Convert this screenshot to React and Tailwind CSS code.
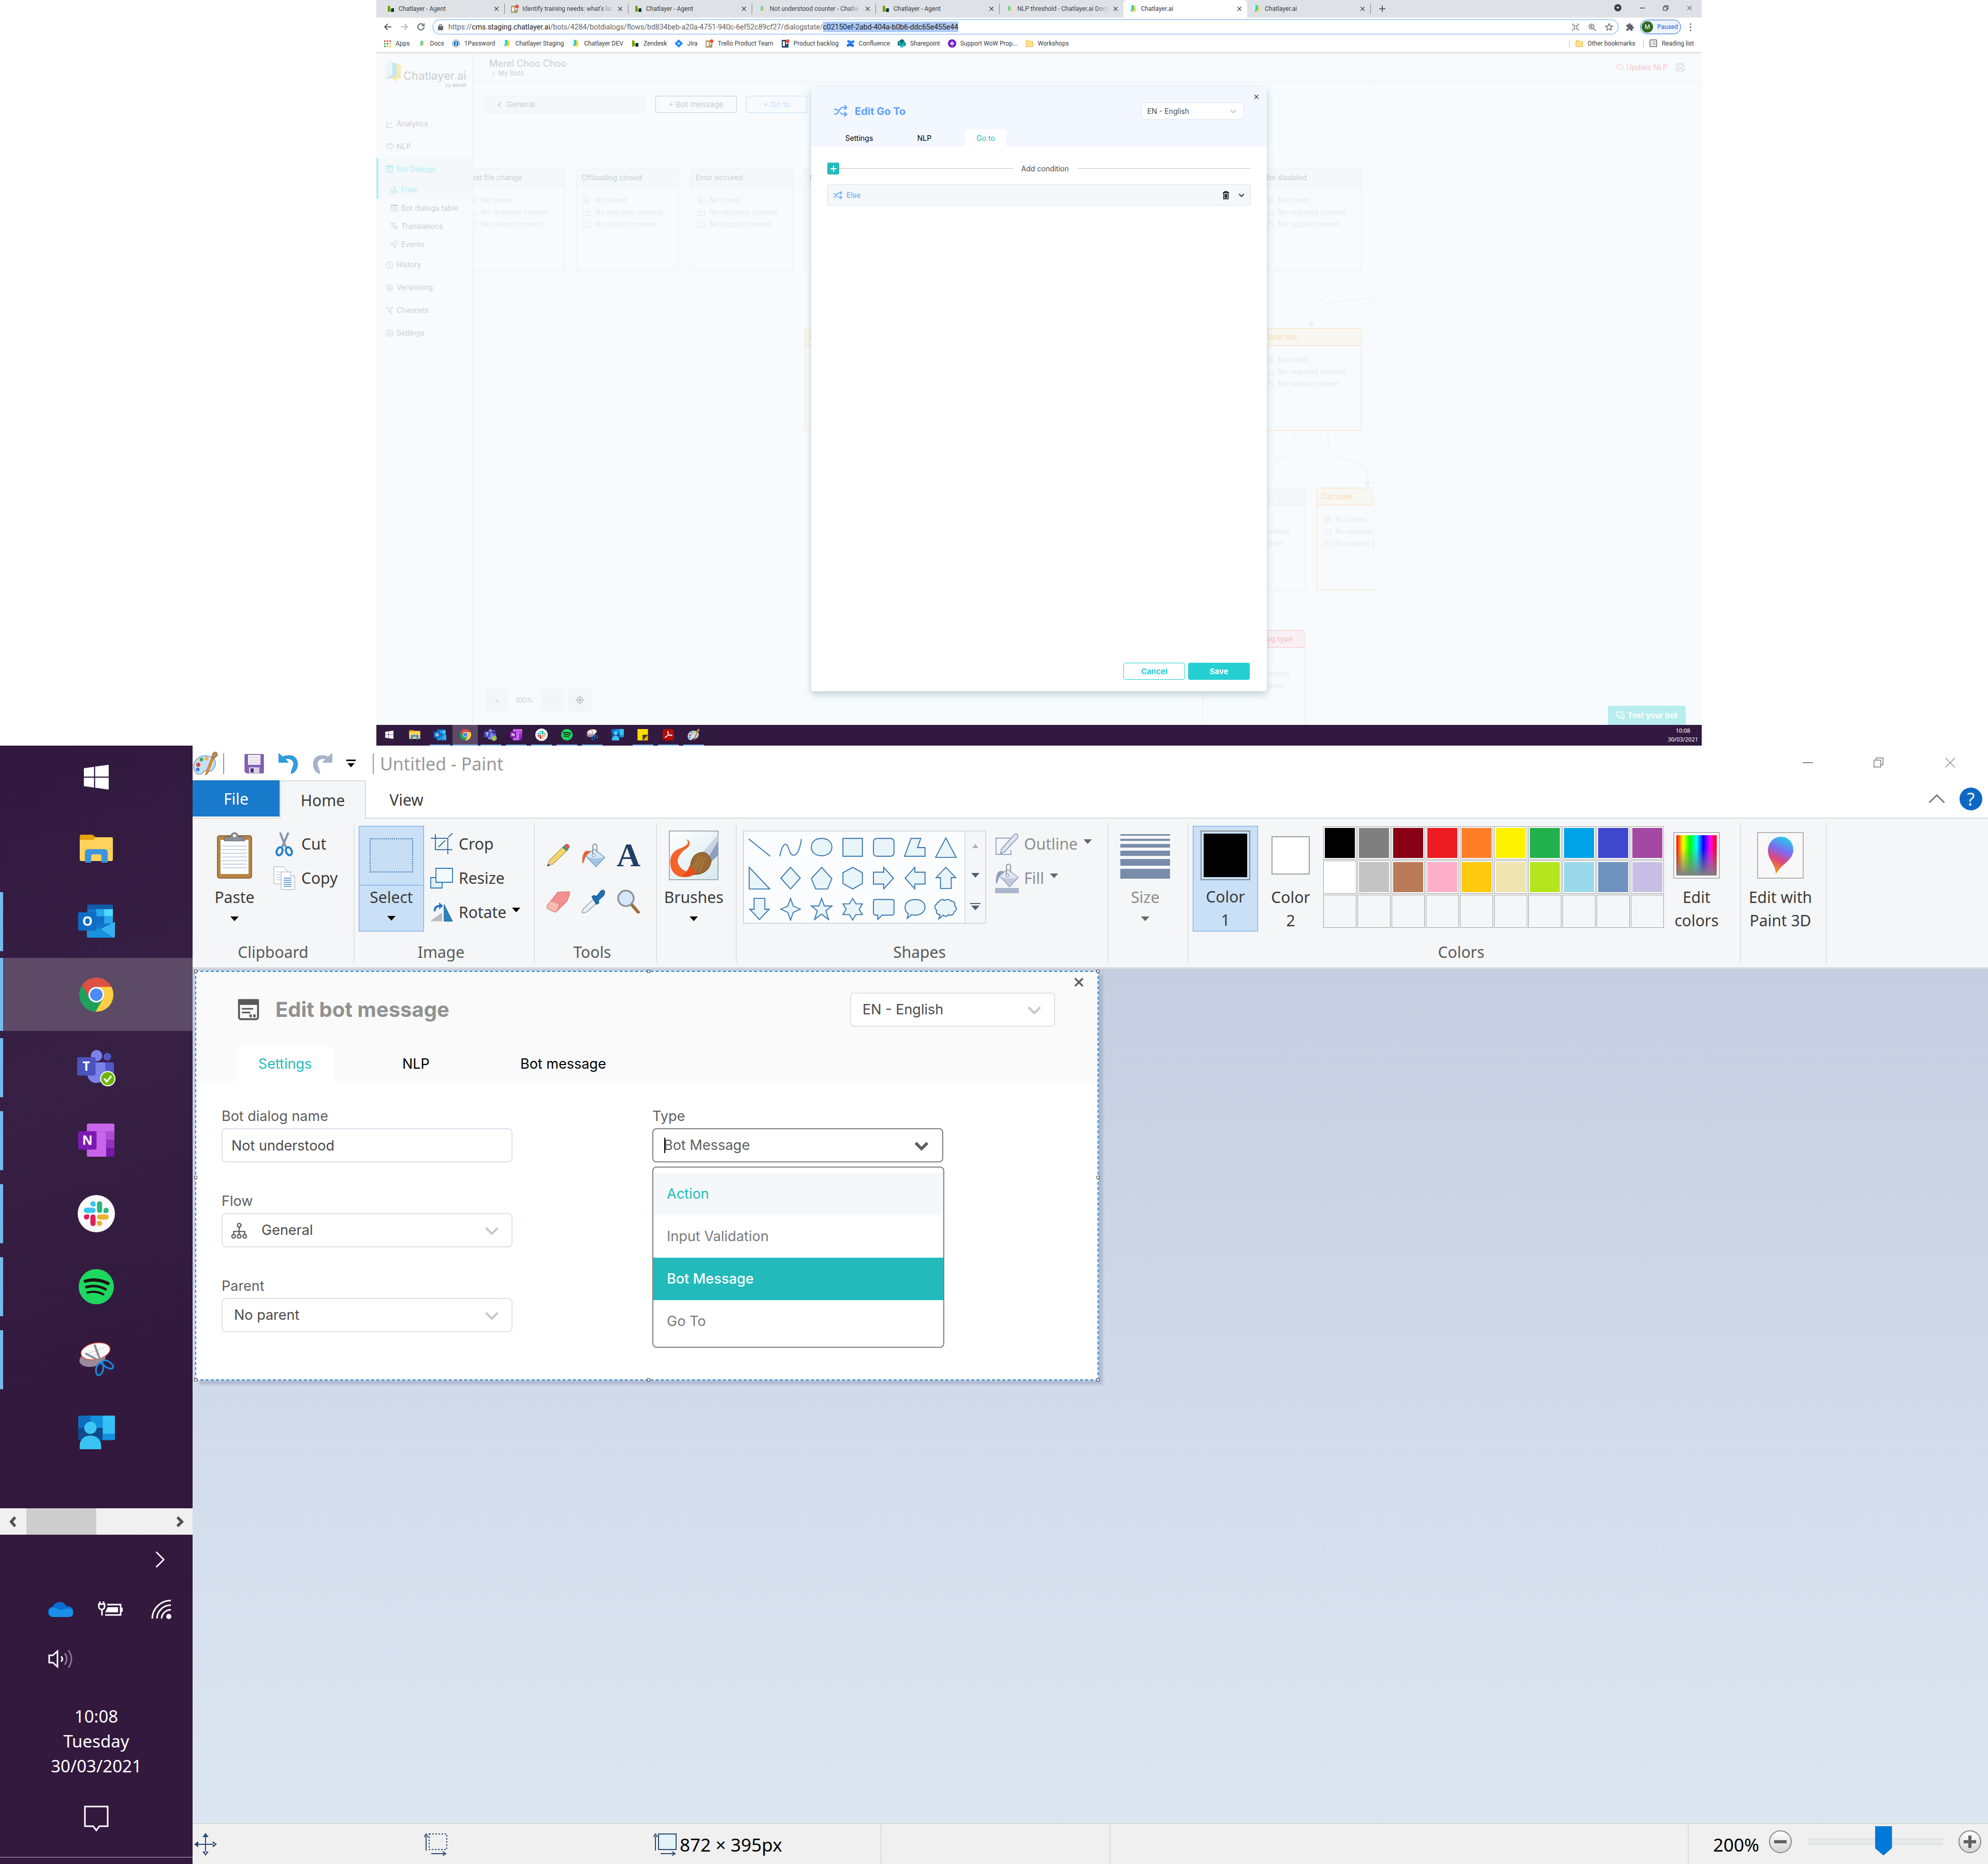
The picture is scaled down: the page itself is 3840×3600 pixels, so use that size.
import React from "react";

const SEGOE = "font-['Noto_Sans',sans-serif]";

/* ---------- application icons ---------- */

const Windows = ({ className }) => (
  <svg viewBox="0 0 24 24" className={className} fill="#fff" preserveAspectRatio="none">
    <path d="M0 3.4 9.8 2v9.4H0zM10.9 1.8 24 0v11.4H10.9zM0 12.5h9.8V22L0 20.6zM10.9 12.5H24V24l-13.1-1.9z" />
  </svg>
);

const Folder = ({ className }) => (
  <svg viewBox="0 0 64 54" className={className}>
    <path d="M0 3a3 3 0 0 1 3-3h21a3 3 0 0 1 2 1l5 4h30a3 3 0 0 1 3 3v20H0z" fill="#e3a008" />
    <path d="M0 10h26l5-5h30a3 3 0 0 1 3 3v40a3 3 0 0 1-3 3H3a3 3 0 0 1-3-3z" fill="#ffd35b" />
    <path d="M10 54V34a6 6 0 0 1 6-6h32a6 6 0 0 1 6 6v20H42V42a4 4 0 0 0-4-4H26a4 4 0 0 0-4 4v12z" fill="#3d94dc" />
  </svg>
);

const LetterTile = ({ letter, fill }) => (
  <>
    <rect x="0" y="15" width="36" height="36" rx="3" fill={fill} />
    <text x="18" y="42" textAnchor="middle" fontSize="25" fontWeight="700" fontFamily="Open Sans, sans-serif" fill="#fff">{letter}</text>
  </>
);

const Outlook = ({ className }) => (
  <svg viewBox="0 0 72 66" className={className}>
    <rect x="18" y="0" width="50" height="50" rx="3" fill="#1476c9" />
    <rect x="18" y="0" width="50" height="9" rx="3" fill="#0f5ba8" />
    <path d="M35 9h16v14H35z" fill="#28a8ea" />
    <path d="M51 9h17v14H51z" fill="#50d9ff" />
    <path d="M35 23h16v14H35z" fill="#0f6fc6" />
    <path d="M51 23h17v14H51z" fill="#28a8ea" />
    <path d="M17 35 44 48 72 34v28a3 3 0 0 1-3 3H20a3 3 0 0 1-3-3z" fill="#1a8fde" />
    <path d="M44 48 72 34v28a3 3 0 0 1-2 3z" fill="#35b2ec" />
    <LetterTile letter="O" fill="#0f6cc4" />
  </svg>
);

const Chrome = ({ className }) => (
  <svg viewBox="0 0 48 48" className={className}>
    <path d="M3.87 10.93A24 24 0 0 1 45.35 13H24a11 11 0 0 0-9.5 16.5z" fill="#dd5044" />
    <path d="M45.35 13a24 24 0 0 1-22.6 34.97L33.5 29.5A11 11 0 0 0 24 13z" fill="#ffce44" />
    <path d="M22.75 47.97A24 24 0 0 1 3.87 10.93L14.5 29.5a11 11 0 0 0 19 0z" fill="#1fa15d" />
    <circle cx="24" cy="24" r="11" fill="#fff" />
    <circle cx="24" cy="24" r="8.8" fill="#4c8bf5" />
  </svg>
);

const Teams = ({ className }) => (
  <svg viewBox="0 -3 76 75" className={className}>
    <circle cx="38" cy="11" r="11" fill="#7b83eb" />
    <circle cx="59" cy="13" r="7.5" fill="#5059c9" />
    <path d="M46 24h22a4 4 0 0 1 4 4v20a13 13 0 0 1-26 0z" fill="#5059c9" />
    <path d="M20 24h32a3 3 0 0 1 3 3v20a17.500 17.500 0 0 1-35 0z" fill="#7b83eb" />
    <g transform="translate(0 -1)"><LetterTile letter="T" fill="#4b53bc" /></g>
    <circle cx="60" cy="56" r="15" fill="#fff" />
    <circle cx="60" cy="56" r="13" fill="#6bb700" />
    <path d="m53 56 5 6 9-11" fill="none" stroke="#fff" strokeWidth="3.500" />
  </svg>
);

const OneNote = ({ className }) => (
  <svg viewBox="0 0 72 66" className={className}>
    <path d="M20 0h48a3 3 0 0 1 3 3v13H17V3a3 3 0 0 1 3-3z" fill="#ca64ea" />
    <path d="M17 16h38v49H20a3 3 0 0 1-3-3z" fill="#ca64ea" />
    <path d="M55 16h16v16H55z" fill="#ae4bd5" />
    <path d="M55 32h16v16H55z" fill="#9332bf" />
    <path d="M55 48h16v14a3 3 0 0 1-3 3H55z" fill="#7719aa" />
    <LetterTile letter="N" fill="#7a1ab0" />
  </svg>
);

const Slack = ({ className }) => (
  <svg viewBox="-6 -6 36 36" className={className}>
    <circle cx="12" cy="12" r="18" fill="#fbfbfb" />
    {["#36c5f0", "#2eb67d", "#ecb22e", "#e01e5a"].map((c, i) => (
      <g key={c} fill={c} transform={`rotate(${i * 90} 12 12)`}>
        <rect x="0" y="6.300" width="11.300" height="5" rx="2.500" />
        <path d="M8.800 0a2.500 2.500 0 0 0 0 5h2.500V2.500A2.500 2.500 0 0 0 8.800 0z" />
      </g>
    ))}
  </svg>
);

const Spotify = ({ className }) => (
  <svg viewBox="0 0 48 48" className={className} fill="none" stroke="#191414" strokeLinecap="round">
    <circle cx="24" cy="24" r="24" fill="#1ed760" stroke="none" />
    <path d="M9 16.500c10-3 22-2 31 3.200" strokeWidth="4.400" />
    <path d="M10.500 24.500c9-2.500 18-1.500 26 3" strokeWidth="3.600" />
    <path d="M12 32c7-1.800 15-1.200 21.500 2.500" strokeWidth="3" />
  </svg>
);

const Snip = ({ className }) => (
  <svg viewBox="0 0 68 68" className={className} fill="none">
    <ellipse cx="26" cy="33" rx="26" ry="15" fill="#9a8a9c" transform="rotate(-12 26 33)" />
    <ellipse cx="32" cy="18" rx="29" ry="16" fill="#fafafa" stroke="#d8432f" strokeWidth="1.500" transform="rotate(-12 32 18)" />
    <path d="M18 22 50 11M22 29l20-8" stroke="#d0d0d0" strokeWidth="1.500" />
    <path d="M30 5 42 38M12 22l30 16" stroke="#8b8f96" strokeWidth="4" />
    <ellipse cx="40" cy="53" rx="7" ry="12" stroke="#1a86d8" strokeWidth="3.500" transform="rotate(12 40 53)" />
    <ellipse cx="56" cy="44" rx="6" ry="12" stroke="#1a86d8" strokeWidth="3.500" transform="rotate(-58 56 44)" />
  </svg>
);

const Contacts = ({ className }) => (
  <svg viewBox="0 0 72 66" className={className}>
    <rect x="0" y="0" width="72" height="48" rx="2" fill="#0f6cbd" />
    <path d="M24 0h24v24H24z" fill="#1490df" />
    <path d="M48 0h22a2 2 0 0 1 2 2v34H48z" fill="#35c1f1" />
    <path d="M0 24h48v24H0z" fill="#114a8b" />
    <path d="M48 36h24v10a2 2 0 0 1-2 2H48z" fill="#1490df" />
    <circle cx="24" cy="24" r="12" fill="#3fc8f5" />
    <path d="M3 66V58c0-10 8-19 21-19s21 9 21 19v8z" fill="#38c3f3" />
  </svg>
);

const Sticky = ({ className }) => (
  <svg viewBox="0 0 22 24" className={className}>
    <path d="M0 0h22v12H11v12H0z" fill="#ffdd00" />
    <path d="M11 24V12h11z" fill="#3b3a39" />
    <path d="M11 24 22 12v12z" fill="#f0b400" />
  </svg>
);

const Acrobat = ({ className }) => (
  <svg viewBox="0 0 24 24" className={className}>
    <rect width="24" height="24" rx="4" fill="#b30b00" />
    <path d="M5 18c3 0 8-7 7-12-.4-1.800-1.800-1-1.400 1 .6 3.400 4 7 8 7 2 0 1.800-1.600 0-1.600C14 12.400 8 14.500 5.500 17z" fill="none" stroke="#fff" strokeWidth="1.300" />
  </svg>
);

const Palette = ({ className }) => (
  <svg viewBox="0 0 48 46" className={className}>
    <path d="M20 8C8 9 0 20 1 31c1 10 8 14 14 12 5-1 5-7 10-7 5 0 5 3 9 1 8-4 11-14 8-21C39 10 30 7 20 8z" fill="#c4dff2" stroke="#6f9cc0" strokeWidth="1.500" />
    <circle cx="10" cy="25" r="4" fill="#e5413a" />
    <circle cx="16" cy="15" r="3.500" fill="#4aa545" />
    <circle cx="26" cy="13" r="3.500" fill="#f2b53a" />
    <circle cx="9" cy="34" r="3.500" fill="#3c7ed0" />
    <path d="m40 12-12 30-4 3 1-6 11-28z" fill="#e8912f" stroke="#a85c17" strokeWidth="1" />
    <path d="m36 11 2-8c2-3 5-3 7-3 0 4 3 4 2 7l-6 6z" fill="#b98a5a" stroke="#7c5730" strokeWidth="1" />
  </svg>
);

/* ---------- small shared drawings ---------- */

const Chev = ({ className, dir = "down", w = 3 }) => {
  const d = { down: "M4 8l8 8 8-8", left: "M15 4l-7 8 7 8", right: "M8 4l8 8-8 8", up: "M4 16l8-8 8 8" }[dir];
  return (
    <svg viewBox="0 0 24 24" className={className} fill="none" stroke="currentColor" strokeWidth={w}><path d={d} /></svg>
  );
};

const Cross = ({ className, w = 2 }) => (
  <svg viewBox="0 0 24 24" className={className} fill="none" stroke="currentColor" strokeWidth={w}><path d="M3 3l18 18M21 3 3 21" /></svg>
);

const Restore = ({ className, w = 2 }) => (
  <svg viewBox="0 0 24 24" className={className} fill="none" stroke="currentColor" strokeWidth={w}><path d="M2 7h15v15H2zM7 7V2h15v15h-5" /></svg>
);

const Shuffle = ({ className }) => (
  <svg viewBox="0 0 24 24" className={className} fill="none" stroke="currentColor" strokeWidth="2">
    <path d="M1 17h3c6 0 5-11 11-11h7M18.500 2 22.500 6l-4 4M1 9h3c2 0 3 .8 4 2.500M12 14.500c1 2 2 3 4 3h6M18.500 13.500l4 4-4 4" />
  </svg>
);

const FlowIcon = ({ className }) => (
  <svg viewBox="0 0 24 24" className={className} fill="none" stroke="currentColor" strokeWidth="1.800">
    <circle cx="12" cy="4" r="2.600" /><circle cx="4" cy="20" r="2.600" /><circle cx="12" cy="20" r="2.600" /><circle cx="20" cy="20" r="2.600" />
    <path d="M12 7v10M4 17v-4h16v4" />
  </svg>
);

const DialogIcon = ({ className }) => (
  <svg viewBox="0 0 24 24" className={className} fill="none" stroke="currentColor" strokeWidth="2">
    <rect x="2" y="2" width="20" height="20" rx="2" />
    <path d="M2 2h20v4H2z" fill="currentColor" />
    <path d="M5 11h12M5 15h9" strokeWidth="1.600" />
    <path d="M13 18.500h2.500M17 18.500h2.500" strokeWidth="3" />
  </svg>
);

const Brain = ({ className }) => (
  <svg viewBox="0 0 24 22" className={className} fill="none" stroke="currentColor" strokeWidth="1.600">
    <path d="M6 3c2-2 5-2 6-1 2-1 5-1 7 1 3 0 4 3 3 5 2 3 0 7-3 7-1 1-3 2-4 1-2 1-3 0-4-1-3 1-6 0-6-2-3 0-4-3-3-5-1-3 1-5 4-5zM12 2v4M8 7h4M16 5c1 1 1 2 3 2M17 16l2 4M4 9h4" />
  </svg>
);

const NAV_DRAW = {
  chart: <path d="M2 2v20h20M6 17l4-8 4 4 6-9" />,
  table: <><rect x="2" y="3" width="20" height="18" rx="2" /><path d="M2 5h20" strokeWidth="3.500" /><path d="M9 9v10M15 9v10M6 12h12M6 16h12" strokeWidth="1" /></>,
  translate: <path d="M1 4h14M8 1v3M3 4c2 6 6 9 9 10M13 4C11 9 6 13 2 15M12 22l5-12 5 12M14 18h6" />,
  events: <><circle cx="16" cy="7" r="5.500" /><circle cx="5" cy="12.500" r="4" /><circle cx="13.500" cy="19.500" r="2.500" /></>,
  clock: <><circle cx="12" cy="12" r="10" /><path d="M12 6v7h4" /></>,
  layers: <path d="M12 2 2 7l10 5 10-5zM2 12l10 5 10-5M2 17l10 5 10-5" />,
  channels: <><circle cx="12" cy="12" r="4.500" /><path d="M9 9 4 4M15 9l4-5M14 16l3 5" /><circle cx="3.500" cy="3.500" r="1.500" /><circle cx="20" cy="3.500" r="1.500" /><circle cx="17" cy="21" r="1.500" /></>,
  gear: <><circle cx="12" cy="12" r="4" /><path d="M9 3l1-2h4l1 2 3 1 3-1 2 4-2 2v4l2 3-2 4-3-1-3 1-1 2h-4l-1-2-3-1-3 1-2-4 2-3v-3L1 7l2-4 3 1z" /></>,
};

const NavIcon = ({ kind, className }) => {
  if (kind === "flow") return <FlowIcon className={className} />;
  if (kind === "dialog") return <DialogIcon className={className} />;
  if (kind === "brain") return <Brain className={className} />;
  return <svg viewBox="0 0 24 24" className={className} fill="none" stroke="currentColor" strokeWidth="1.600">{NAV_DRAW[kind]}</svg>;
};

/* ---------- browser ---------- */

const Book = ({ className }) => (
  <svg viewBox="0 0 16 16" className={className}>
    <path d="M6 2h6a1 1 0 0 1 1 1v10h-3v3l-3-3H4z" fill="#fcd53f" />
    <path d="M4 1h5v9l-6 4z" fill="#1fd0d6" />
    <path d="M2 3l3-2v8l-3 5z" fill="#d4f3f4" />
  </svg>
);

const FAVICON = {
  zendesk: <svg viewBox="0 0 16 16" className="size-4 shrink-0"><path d="M2 2h4l2 9-3 3H2z" fill="#78a300" /><path d="M9 7h5v7H8z" fill="#03363d" /></svg>,
  trello: <svg viewBox="0 0 16 16" className="size-4 shrink-0"><rect x="1" y="2" width="13" height="14" rx="1" fill="#b09a70" /><path d="M3 5h4v8H3zM9 5h3v5H9z" fill="#fff" /><circle cx="12.500" cy="3.500" r="3.500" fill="#eb4f3a" /></svg>,
  backlog: <svg viewBox="0 0 16 16" className="size-4 shrink-0"><rect x="1" y="1" width="13" height="15" rx="1" fill="#2a4a70" /><path d="M3 4h4v9H3zM9 4h3v5H9z" fill="#fff" /><circle cx="12.500" cy="3.500" r="3.500" fill="#eb4f3a" /></svg>,
  book: <Book className="size-4 shrink-0" />,
  docs: <Book className="size-4 shrink-0 p-0.5" />,
  apps: <svg viewBox="0 0 16 16" className="size-4 shrink-0">{["#ea4335", "#ea4335", "#ea4335", "#34a853", "#4285f4", "#fbbc05", "#34a853", "#fbbc05", "#fbbc05"].map((c, i) => <rect key={i} x={2 + (i % 3) * 5} y={2 + Math.floor(i / 3) * 5} width="3" height="3" fill={c} />)}</svg>,
  onepw: <svg viewBox="0 0 16 16" className="size-4 shrink-0"><circle cx="8" cy="8" r="7" fill="#fff" stroke="#6b7785" /><circle cx="8" cy="8" r="5" fill="#1a6fd6" /><path d="M8 5v6" stroke="#fff" strokeWidth="2" /></svg>,
  jira: <svg viewBox="0 0 16 16" className="size-4 shrink-0"><path d="M8 0l8 8-8 8-8-8z" fill="#2684ff" /><path d="M8 5.500 10.500 8 8 10.500 5.500 8z" fill="#fff" /></svg>,
  confluence: <svg viewBox="0 0 16 16" className="size-4 shrink-0"><path d="M0 12c4-6 7-5 11-3l4 2-2 4-5-2c-2-1-3-1-5 2z" fill="#1868db" /><path d="M16 4c-4 6-7 5-11 3L1 5l2-4 5 2c2 1 3 1 5-2z" fill="#2684ff" /></svg>,
  sharepoint: <svg viewBox="0 0 16 16" className="size-4 shrink-0"><circle cx="8" cy="5" r="5" fill="#036c70" /><circle cx="11.500" cy="9" r="4.500" fill="#1a9ba1" /><circle cx="8" cy="12.500" r="3.500" fill="#37c6d0" /><rect x="0" y="4" width="8" height="8" rx="1" fill="#03787c" /><path d="M5.500 6.500c-2-1-3 .5-1.500 1.500s.5 2.500-1.500 1.500" fill="none" stroke="#fff" /></svg>,
  support: <svg viewBox="0 0 16 16" className="size-4 shrink-0"><circle cx="8" cy="8" r="8" fill="#6c1cc4" /><path d="M8 3l4 5-4 5-4-5z" fill="#fff" /><path d="M8 4v8" stroke="#6c1cc4" /></svg>,
  folder: <svg viewBox="0 0 16 16" className="size-4 shrink-0"><path d="M1 2h5l2 2h6v10H1z" fill="#ffe08a" stroke="#e3b33c" /></svg>,
  reading: <svg viewBox="0 0 16 16" className="size-4 shrink-0" fill="none" stroke="#5f6368"><rect x="1" y="1" width="13" height="13" rx="1" strokeWidth="1.500" /><path d="M3.500 4.500h2M7 4.500h5M3.500 7.500h2M7 7.500h5M3.500 10.500h2M7 10.500h5" /></svg>,
};

const TABS = [
  ["zendesk", "Chatlayer - Agent"],
  ["trello", "Identify training needs: what's lac"],
  ["zendesk", "Chatlayer - Agent"],
  ["docs", "Not understood counter - Chatla"],
  ["zendesk", "Chatlayer - Agent"],
  ["docs", "NLP threshold - Chatlayer.ai Docu"],
  ["book", "Chatlayer.ai", true],
  ["book", "Chatlayer.ai"],
];

const BOOKMARKS = [
  ["apps", "Apps"], ["docs", "Docs"], ["onepw", "1Password"], ["book", "Chatlayer Staging"], ["book", "Chatlayer DEV"],
  ["zendesk", "Zendesk"], ["jira", "Jira"], ["trello", "Trello Product Team"], ["backlog", "Product backlog"],
  ["confluence", "Confluence"], ["sharepoint", "Sharepoint"], ["support", "Support WoW Prop..."], ["folder", "Workshops"],
];

function Browser() {
  return (
    <header className="font-[Roboto,sans-serif] text-xs text-[#3c4043]">
      <div className="flex h-[34px] items-stretch bg-[#dee1e6] pl-[9px]">
        {TABS.map(([icon, title, active], i) => (
          <div
            key={i}
            className={"flex w-[239px] shrink items-center gap-[7px] pr-[10px] pl-[11px] " + (active ? "rounded-t-lg bg-white" : "")}
          >
            {FAVICON[icon]}
            <span className={"min-w-0 flex-1 overflow-hidden whitespace-nowrap " + (title.length > 20 ? "[mask-image:linear-gradient(to_right,#000_85%,transparent)]" : "")}>{title}</span>
            <button aria-label="Close tab"><Cross className="size-[10px]" w={3} /></button>
            {!active && i !== 5 && <span className="-mr-[10px] ml-[3px] h-5 w-px bg-[#80868b]" />}
          </div>
        ))}
        <button aria-label="New tab" className="flex w-11 items-center justify-center">
          <svg viewBox="0 0 12 12" className="size-3" stroke="#3c4043" strokeWidth="1.600"><path d="M6 0v12M0 6h12" /></svg>
        </button>
        <div className="ml-auto flex items-center gap-[35px] pr-[18px] pb-1 text-black">
          <span className="flex size-[14px] items-center justify-center rounded-full bg-[#3c4043]"><svg viewBox="0 0 8 8" className="size-[6px]" fill="#fff"><path d="M0 2h8L4 7z" /></svg></span>
          <button aria-label="Minimize" className="h-px w-[10px] bg-black" />
          <button aria-label="Restore"><Restore className="size-[11px]" /></button>
          <button aria-label="Close"><Cross className="size-[11px]" /></button>
        </div>
      </div>
      <div className="flex h-9 items-center bg-white pr-[18px] pl-[13px] text-[#5f6368]">
        <div className="flex w-[95px] items-center gap-[14px]">
          <svg viewBox="0 0 18 18" className="size-[18px]" fill="none" stroke="#5f6368" strokeWidth="2"><path d="M16 9H3M9 3 3 9l6 6" /></svg>
          <svg viewBox="0 0 18 18" className="size-[18px]" fill="none" stroke="#babcbe" strokeWidth="2"><path d="M2 9h13M9 3l6 6-6 6" /></svg>
          <svg viewBox="0 0 18 18" className="size-[18px]" fill="none" stroke="#5f6368" strokeWidth="2"><path d="M15 9a6 6 0 1 1-2-4.500M15 2v4.500h-4.500" /></svg>
        </div>
        <div className="flex h-[30px] flex-1 items-center rounded-full border-2 border-[#b3d1f7] px-[9px] text-sm">
          <svg viewBox="0 0 12 14" className="mr-[10px] h-[13px] w-[10px]" fill="none" stroke="#5f6368" strokeWidth="2"><path d="M3 6V4a3 3 0 0 1 6 0v2" /><rect x="1" y="6" width="10" height="7" fill="#5f6368" /></svg>
          <span>https://<span className="text-[#202124]">cms.staging.chatlayer.ai</span>/bots/4284/botdialogs/flows/bd834beb-a20a-4751-940c-6ef52c89cf27/dialogstate/<mark className="bg-[#acc9f8] py-[2px] text-[#202124]">c02150ef-2abd-404a-b0b6-ddc65e455e44</mark></span>
          <span className="ml-auto flex items-center gap-[17px]">
            <svg viewBox="0 0 16 16" className="size-[15px]" fill="#5f6368"><path d="M1 1h4v1H2v3H1zM11 1h4v4h-1V2h-3zM1 11h1v3h3v1H1zM14 11h1v4h-4v-1h3zM4 4h3v3H4zM9 4h3v3H9zM4 9h3v3H4zM9 9h3v3H9z" /></svg>
            <svg viewBox="0 0 16 16" className="size-[15px]" fill="none" stroke="#5f6368" strokeWidth="1.600"><circle cx="6.500" cy="6.500" r="5" /><path d="m10.500 10.500 5 5M4 6.500h5M6.500 4v5" /></svg>
            <svg viewBox="0 0 16 16" className="size-4" fill="none" stroke="#5f6368" strokeWidth="1.400"><path d="m8 1.500 2 4.500 4.700.4-3.600 3.100 1.100 4.700L8 11.700l-4.200 2.500 1.100-4.700L1.300 6.400 6 6z" /></svg>
          </span>
        </div>
        <div className="flex items-center pl-[13px]">
          <svg viewBox="0 0 24 24" className="mr-[11px] size-[17px]" fill="#5f6368"><path d="M20.500 11H19V7a2 2 0 0 0-2-2h-4V3.500a2.500 2.500 0 0 0-5 0V5H4a2 2 0 0 0-2 2v3.800h1.500a2.700 2.700 0 0 1 0 5.400H2V20a2 2 0 0 0 2 2h3.800v-1.500a2.700 2.700 0 0 1 5.400 0V22H17a2 2 0 0 0 2-2v-4h1.500a2.500 2.500 0 0 0 0-5z" /></svg>
          <button className="flex h-7 w-[79px] items-center gap-2 rounded-full border border-[#1967d2] bg-[#eef3fd] pl-[2px] text-[#1967d2]">
            <span className="flex size-[22px] items-center justify-center rounded-full bg-[#33691e] text-white">M</span>Paused
          </button>
          <button aria-label="Menu" className="ml-[14px] flex w-[8px] flex-col items-center gap-[3px]">{[0, 1, 2].map((i) => <span key={i} className="size-[3px] rounded-full bg-[#5f6368]" />)}</button>
        </div>
      </div>
      <nav className="flex h-[33px] items-center gap-[15px] border-b-2 border-[#dadce0] bg-white pr-[15px] pb-[3px] pl-[13px]">
        {BOOKMARKS.map(([icon, label]) => (
          <a key={label} href="#" className="flex items-center gap-2 whitespace-nowrap">{FAVICON[icon]}{label}</a>
        ))}
        <a href="#" className="ml-auto flex items-center gap-2 border-l border-[#bdc1c6] pl-[11px] whitespace-nowrap">{FAVICON.folder}Other bookmarks</a>
        <a href="#" className="flex items-center gap-2 border-l border-[#bdc1c6] pl-[11px] whitespace-nowrap">{FAVICON.reading}Reading list</a>
      </nav>
    </header>
  );
}

/* ---------- Chatlayer application ---------- */

const NAV = [
  { icon: "chart", label: "Analytics", cls: "h-11 pl-[18px]" },
  { icon: "brain", label: "NLP", cls: "h-11 pl-[18px]" },
  { icon: "dialog", label: "Bot Dialogs", cls: "h-[43px] pl-[14px] border-l-4 border-[#b6ecee] bg-[#f4f8fb] text-[#b6ecee]" },
  { icon: "flow", label: "Flow", cls: "h-9 pl-[23px] border-l-4 border-[#b6ecee] bg-[#f4f8fb] text-[#b6ecee]" },
  { icon: "table", label: "Bot dialogs table", cls: "h-[35px] pl-[27px]" },
  { icon: "translate", label: "Translations", cls: "h-[35px] pl-[27px]" },
  { icon: "events", label: "Events", cls: "h-[35px] pl-[27px]" },
  { icon: "clock", label: "History", cls: "h-11 pl-[18px]" },
  { icon: "layers", label: "Versioning", cls: "h-11 pl-[18px]" },
  { icon: "channels", label: "Channels", cls: "h-11 pl-[18px]" },
  { icon: "gear", label: "Settings", cls: "h-11 pl-[18px]" },
];

const TONE = {
  gray: ["border-[#ebeff2]", "bg-[#f4f8fb] text-[#c9ced1]"],
  orange: ["border-[#fce0b8]", "bg-[#f8f7f2] text-[#fcdcb4]"],
  red: ["border-[#fbc4c8]", "bg-[#f9f0f3] text-[#fbb8bd]"],
};

const NODES = [
  { x: -21, y: 168, title: "Test file change", tone: "gray" },
  { x: 199, y: 168, title: "Offloading closed", tone: "gray" },
  { x: 420, y: 168, title: "Error occured", tone: "gray" },
  { x: 640, y: 168, title: "Bot message", tone: "gray" },
  { x: 1518, y: 168, title: "Bot disabled", tone: "gray" },
  { x: 640, y: 476, title: "Input test", tone: "orange" },
  { x: 1518, y: 476, title: "Code test", tone: "orange" },
  { x: 1409, y: 784, title: "", tone: "gray" },
  { x: 1629, y: 784, title: "Carousel", tone: "orange" },
  { x: 1409, y: 1059, title: "Unsupported dialog type", tone: "red", tall: true },
];

function Node({ x, y, title, tone, tall }) {
  const [border, head] = TONE[tone];
  return (
    <article className={"absolute w-[198px] overflow-hidden rounded border " + (tall ? "h-[260px] " : "h-[198px] ") + (tall ? "border-[#f9e6ea] border-t-[#fbc4c8]" : border)} style={{ left: x, top: y }}>
      <h3 className={"flex h-[33px] items-center border-b pl-[9px] whitespace-nowrap " + border + " " + head}>{title}</h3>
      <ul className="pt-[15px] pl-3 leading-[23px] whitespace-nowrap text-[#e6eaed]">
        {[
          ["No Intent", <g key="a"><path d="M14.500 6A7 7 0 1 1 11 2M11.500 8A4 4 0 1 1 9 4.500" /><path d="m5 8 2.500 2.500L15 3" /></g>],
          ["No required context", <path key="b" d="M1 3v12h14V3M8 2v8M4.500 7 8 10.500 11.500 7" />],
          ["No output context", <path key="c" d="M1 3v12h14V3M8 11V2M4.500 5.500 8 2l3.500 3.500" />],
        ].map(([t, d]) => (
          <li key={t} className="flex items-center gap-2">
            <svg viewBox="0 0 16 16" className="size-[15px]" fill="none" stroke="currentColor" strokeWidth="1.200">{d}</svg>{t}
          </li>
        ))}
      </ul>
    </article>
  );
}

function EditGoTo() {
  return (
    <section role="dialog" aria-label="Edit Go To" className="absolute top-[65px] left-[840px] flex min-h-[1167px] w-[880px] flex-col rounded-[4px] bg-white text-[#4b4b4b] shadow-[0_6px_14px_rgba(60,110,120,0.3)]">
      <header className="rounded-t-[4px] bg-[#f3f7ff] pr-[14px] pl-10">
        <div className="flex h-[30px] items-center justify-end pt-2 pr-[1px]"><button aria-label="Close"><Cross className="size-[10px]" w={4} /></button></div>
        <div className="flex h-[33px] items-center pr-[31px]">
          <Shuffle className="mr-[14px] ml-[3px] size-[27px] text-[#5aa2ff]" />
          <h2 className="text-xl font-bold text-[#5aa2ff]">Edit Go To</h2>
          <label className="relative ml-auto w-[198px]">
            <select aria-label="Language" className="h-[33px] w-full appearance-none rounded border border-[#dbe4ee] bg-white pl-[11px] text-sm"><option>EN - English</option></select>
            <Chev className="absolute top-[9px] right-[12px] size-4 text-[#c8c8c8]" />
          </label>
        </div>
        <div className="mt-[19px] flex h-[33px] text-sm text-black">
          <button className="w-[104px] pl-[1px]">Settings</button>
          <button className="w-[148px] pl-[1px]">NLP</button>
          <span className="w-[5px]" />
          <button className="w-20 rounded-t bg-white text-[#23babc]">Go to</button>
        </div>
      </header>
      <div className="px-[31px] pt-[31px]">
        <div className="flex h-[23px] items-center text-sm">
          <button aria-label="Add" className="flex size-[23px] items-center justify-center rounded-[3px] bg-[#23babc]"><svg viewBox="0 0 12 12" className="size-3" stroke="#fff" strokeWidth="2"><path d="M6 0v12M0 6h12" /></svg></button>
          <span className="h-px flex-1 bg-[#c4c4c4]" /><span className="px-4">Add condition</span><span className="h-px flex-1 bg-[#c4c4c4]" />
        </div>
        <div className="mt-[19px] flex h-[41px] items-center rounded-[3px] border border-[#d9e2ea] bg-[#f4f8fb] px-[10px] text-sm">
          <Shuffle className="mr-2 size-[18px] text-[#5aa2ff]" /><span className="text-[#5aa2ff]">Else</span>
          <button aria-label="Delete" className="ml-auto text-black"><svg viewBox="0 0 16 18" className="h-[16px] w-[14px]" fill="none" stroke="currentColor" strokeWidth="1.600"><path d="M1 3.500h14M5 3V1h6v2M3 4v13h10V4M6 6v9M8 6v9M10 6v9" /></svg></button>
          <button aria-label="Expand" className="ml-[16px]"><Chev className="size-[14px]" w={4} /></button>
        </div>
      </div>
      <footer className="mt-auto flex justify-end gap-[6px] pr-[33px] pb-[22px] text-[15px] font-bold">
        <button className="h-[33px] w-[119px] rounded border border-[#26cfd2] text-[#26cfd2]">Cancel</button>
        <button className="h-[33px] w-[119px] rounded bg-[#26cfd2] text-white">Save</button>
      </footer>
    </section>
  );
}

function Chatlayer() {
  return (
    <div className="relative flex min-h-[1297px] bg-[#f7fbfe] font-[Inter,sans-serif] text-sm text-[#c9ced1]">
      <aside className="w-[187px] shrink-0 border-r-2 border-[#f0f4f7]">
        <div className="flex h-[114px] items-start gap-[5px] pt-[13px] pl-4">
          <svg viewBox="0 0 31 42" className="h-[42px] w-[31px]"><path d="M15 8h13a3 3 0 0 1 3 3v25h-8v6l-8-6H2z" fill="#f9eab0" /><path d="M14 5h6a3 3 0 0 1 3 3v23l-21 6z" fill="#c3e8ed" /><path d="M0 10 15 0v27L1 37z" fill="#ecf5f8" /></svg>
          <div className="flex flex-col items-end pt-[16px]">
            <span className="text-[22px] leading-7">Chatlayer<span className="text-[#fbe9b0]">.</span>ai</span>
            <span className="-mt-1 text-[10px] leading-4">by <b>sinch</b></span>
          </div>
        </div>
        <nav>
          {NAV.map((n) => (
            <a key={n.label} href="#" className={"flex items-center gap-[6px] " + n.cls}><NavIcon kind={n.icon} className="size-[15px]" />{n.label}</a>
          ))}
        </nav>
      </aside>
      <main className="flex min-w-0 flex-1 flex-col">
        <div className="flex h-[55px] justify-between border-b border-[#e9edf0] pr-[32px] pl-[31px]">
          <div className="pt-2">
            <h1 className="text-lg leading-6">Merel Choo Choo</h1>
            <a href="#" className="-mt-[3px] flex items-center gap-1 pl-[4px] text-[13px] leading-[18px]"><Chev dir="left" className="size-[9px]" />My Bots</a>
          </div>
          <div className="flex items-center gap-[15px]">
            <button className="flex items-center gap-[6px] text-[#fbc4c4]"><Brain className="size-[15px]" />Update NLP</button>
            <svg viewBox="0 0 20 20" className="size-[19px]" fill="none" stroke="#d3d8db" strokeWidth="1.600"><circle cx="10" cy="10" r="9" /><circle cx="10" cy="8" r="4" /><path d="M4 16c2-5 10-5 12 0" /></svg>
          </div>
        </div>
        <div className="relative w-[1740px] max-w-full flex-1 overflow-hidden border-r border-[#eff3f6]">
          <svg className="absolute inset-0 size-full" fill="none" stroke="#eef3f7" strokeWidth="1.500">
            <path d="M1746 416 1660 425C1630 430 1618 445 1618 466M1585 674v12c0 24-8 36-23 40l-29 6M1651 674v12c0 26 11 36 29 41l27 7c15 6 21 20 21 38" />
            <path d="M1612 465h12l-6 11zM1722 772h12l-6 12z" fill="#eaf0f4" />
          </svg>
          {NODES.map((n, i) => <Node key={i} {...n} />)}
          <div className="absolute top-[27px] left-6 flex h-[33px] items-stretch text-[15px]">
            <button className="flex w-[308px] items-center gap-[7px] rounded border border-[#eef2f5] bg-[#f4f8fb] pl-[20px]"><Chev dir="left" className="size-[12px]" w={4} />General</button>
            <button className="ml-5 w-[157px] rounded border border-[#c9ced1]">+ Bot message</button>
            <button className="ml-[18px] w-[118px] rounded border border-[#c6defc] text-[#c6defc]">+ Go to</button>
          </div>
          <div className="absolute top-[1172px] left-[23px] flex h-11 items-stretch text-[13px]">
            <button className="w-[45px] rounded bg-[#f2f6f8]">+</button>
            <span className="w-[62px] content-center text-center">100%</span>
            <button className="w-[45px] rounded bg-[#f2f6f8]">-</button>
            <button aria-label="Center" className="ml-2 flex w-[45px] items-center justify-center rounded bg-[#f2f6f8]"><svg viewBox="0 0 16 16" className="size-4" fill="none" stroke="#b4babd" strokeWidth="1.400"><circle cx="8" cy="8" r="5.500" /><circle cx="8" cy="8" r="2" fill="#b4babd" /><path d="M8 0v3M8 13v3M0 8h3M13 8h3" /></svg></button>
          </div>
        </div>
      </main>
      <button className="absolute right-[31px] bottom-0 flex h-[37px] w-[150px] items-center justify-center gap-[6px] rounded-t bg-[#b7edee] text-[15px] font-bold text-white">
        <svg viewBox="0 0 16 16" className="size-4" fill="none" stroke="#fff" strokeWidth="1.300"><path d="M1 1h10v8H5l-2 2V9H1zM13 5h2v8h-2v2l-2-2H7v-2" /></svg>Test your bot
      </button>
      <EditGoTo />
    </div>
  );
}

const TASKS = [
  [Windows, "size-4", ""], [Folder, "h-[18px] w-[22px]", ""], [Outlook, "h-[22px] w-6", "l"], [Chrome, "size-[22px]", "a"],
  [Teams, "h-6 w-[25px]", "l"], [OneNote, "h-[22px] w-6", "l"], [Slack, "size-6", "l"], [Spotify, "size-[22px]", "l"],
  [Snip, "size-[22px]", "l"], [Contacts, "h-[22px] w-6", ""], [Sticky, "h-[22px] w-[21px]", "l"], [Acrobat, "size-[22px]", "l"], [Palette, "size-6", "l"],
];

function Monitor() {
  return (
    <div className="grid grid-cols-[727fr_2560fr_553fr] bg-white">
      <div className="col-start-2 min-w-0">
        <Browser />
        <Chatlayer />
        <div className={"flex h-10 items-stretch bg-[#32193f] text-white " + SEGOE}>
          {TASKS.map(([Icon, size, state], i) => (
            <button key={i} aria-label={Icon.name} className={"flex w-[49px] flex-col items-center justify-between " + (state === "a" ? "bg-[#5c4a66]" : "")}>
              <span className="h-0" />
              <Icon className={size} />
              <span className={"h-[2px] " + (state === "a" ? "w-full bg-[#76b9ed]" : state === "l" ? "w-10 bg-[#76b9ed]" : "w-0")} />
            </button>
          ))}
          <div className="ml-auto pt-[2px] pr-[7px] text-center text-[11px] leading-[17px]"><div>10:08</div><div>30/03/2021</div></div>
        </div>
      </div>
    </div>
  );
}

/* ---------- vertical task bar ---------- */

const SIDE = [
  [Folder, "w-16", ""], [Outlook, "w-[71px]", "l"], [Chrome, "w-[66px]", "a"], [Teams, "w-[75px]", "l"], [OneNote, "w-[71px]", "l"],
  [Slack, "w-[72px]", "l"], [Spotify, "w-[68px]", "l"], [Snip, "w-[67px]", "l"], [Contacts, "w-[71px]", ""],
];

function SideBar() {
  return (
    <aside className={"flex w-[372px] shrink-0 flex-col bg-[linear-gradient(160deg,#31183f_0%,#372044_30%,#31183c_60%,#33193e_100%)] text-white " + SEGOE}>
      <button aria-label="Start" className="flex h-[128px] items-center justify-center pb-[7px]"><Windows className="size-12" /></button>
      {SIDE.map(([Icon, size, state], i) => (
        <button key={i} aria-label={Icon.name} className={"flex h-[141px] items-center justify-between " + (state === "a" ? "bg-[#5c4a66]" : "")}>
          <span className={"w-[6px] " + (state === "a" ? "h-full bg-[#76b9ed]" : state === "l" ? "h-[114px] bg-[#76b9ed]" : "h-0")} />
          <Icon className={size} />
          <span className="w-[6px]" />
        </button>
      ))}
      <div className="mt-[76px] flex h-[51px] items-stretch bg-[#f0f0f0] text-[#505050]">
        <button aria-label="Scroll left" className="flex w-[51px] items-center justify-center"><Chev dir="left" className="size-[26px]" w={5} /></button>
        <span className="w-[135px] bg-[#cdcdcd]" />
        <button aria-label="Scroll right" className="ml-auto flex w-[51px] items-center justify-center"><Chev dir="right" className="size-[26px]" w={5} /></button>
      </div>
      <div className="flex h-24 items-center justify-end pr-[41px]"><Chev dir="right" className="size-11" w={1.5} /></div>
      <div className="grid grid-cols-[96px_96px_86px] pl-[93px]">
        <svg viewBox="0 0 48 32" className="my-8 h-8 w-12"><path d="M10 31A10 10 0 0 1 9 11a14 14 0 0 1 26-1 10 10 0 0 1 5 21z" fill="#0a6cd0" /><path d="M9 31a9 9 0 0 1-6-14c6-8 14-4 18 0l19-3a8 8 0 0 1 1 17z" fill="#1a8ee8" /></svg>
        <svg viewBox="0 0 48 36" className="my-[30px] h-9 w-12" fill="none" stroke="#fff" strokeWidth="3"><path d="M18 9h26v20H14" /><path d="M46 15v8" strokeWidth="4" /><path d="M19 14h20v10H14z" fill="#fff" stroke="none" /><path d="M2 8h11v5a5 5 0 0 1-11 0zM4 8V3M11 8V3M8 18v12" /></svg>
        <svg viewBox="0 0 40 40" className="my-7 ml-[7px] size-10" fill="none" stroke="#fff" strokeWidth="3"><path d="M2 38A36 36 0 0 1 38 3M11 38A27 27 0 0 1 38 12M20 38a18 18 0 0 1 18-17" /><circle cx="34" cy="34" r="5" fill="#fff" stroke="none" /></svg>
        <svg viewBox="0 0 48 44" className="my-[26px] h-11 w-12" fill="none" stroke="#fff" strokeWidth="3"><path d="M2 15h7l9-8v30l-9-8H2z" /><path d="M25 17q5 5 0 10" /><path d="M32 11q8 11 0 22M39 5q12 17 0 34" stroke="#8a7692" /></svg>
      </div>
      <div className="mt-[39px] text-center text-[33px] leading-[48px]"><div>10:08</div><div>Tuesday</div><div>30/03/2021</div></div>
      <svg viewBox="0 0 48 50" className="mx-auto mt-[52px] h-[50px] w-12" fill="none" stroke="#fff" strokeWidth="3"><path d="M2 2h44v38H30l-6 8-6-8H2z" /></svg>
      <span className="mt-auto mb-3 h-[2px] bg-[#7a6884]" />
    </aside>
  );
}

/* ---------- Paint ---------- */

const Down = ({ className = "text-black" }) => <svg viewBox="0 0 16 9" className={"h-[9px] w-4 shrink-0 " + className} fill="currentColor"><path d="M0 0h16L8 9z" /></svg>;

const Group = ({ label, className, labelClass = "", children }) => (
  <section className={"my-2 flex h-[271px] shrink-0 flex-col border-r-2 border-[#e1e2e4] " + className}>
    <div className="flex flex-1 items-start pt-[6px]">{children}</div>
    <h3 className={"h-10 text-center leading-[38px] text-[#5a5a5a] " + labelClass}>{label}</h3>
  </section>
);

const Big = ({ icon, lines, arrow, arrowClass = "text-black", className = "w-[126px]" }) => (
  <button className={"flex h-[204px] shrink-0 flex-col items-center " + className}>
    <span className="flex h-[114px] items-center justify-center">{icon}</span>
    {lines.map((l) => <span key={l} className="h-[45px] leading-[47px] whitespace-nowrap">{l}</span>)}
    {arrow && <span className="flex h-[45px] items-center pb-1"><Down className={arrowClass} /></span>}
  </button>
);

const Row = ({ icon, label, arrow, arrowClass = "text-black", className = "" }) => (
  <button className={"flex h-[66px] items-center gap-[11px] whitespace-nowrap " + className}>
    <span className="flex w-11 justify-center">{icon}</span><span className="-mt-[2px]">{label}</span>{arrow && <span className="pb-[10px]"><Down className={arrowClass} /></span>}
  </button>
);

const SHAPES = [
  "M2 8 42 40",
  "M2 40C6 20 12 14 16 20s4 18 12 18S41 20 42 8",
  "M22 7c12 0 19 7 19 16s-7 16-19 16S3 32 3 23 10 7 22 7z",
  "M4 7h36v33H4z",
  "M10 7h24q7 0 7 7v19q0 7-7 7H10q-7 0-7-7V14q0-7 7-7z",
  "M3 40 15 7h18l-6 17h14v16z",
  "M22 6 41 42H3z",
  "M3 3v40h38z",
  "M22 3 40 23 22 43 4 23z",
  "M22 3 41 24 33 43H11L3 24z",
  "M22 3l18 10v20L22 43 4 33V13z",
  "M3 12h19V3l18 20-18 20V34H3z",
  "M41 12H22V3L4 23l18 20V34h19z",
  "M22 3 40 22H32v20H12V22H4z",
  "M12 3h20v20h8L22 42 4 23h8z",
  "M22 3l5 14 13 6-13 6-5 14-5-14-13-6 13-6z",
  "M22 3l5 14h14L30 26l5 16-13-10L9 42l5-16L3 17h14z",
  "M22 3l6 10h12l-6 10 6 10H28l-6 10-6-10H4l6-10L4 13h12z",
  "M7 5h30q4 0 4 4v21q0 4-4 4H19l-8 8V34H7q-4 0-4-4V9q0-4 4-4z",
  "M23 5c11 0 18 6 18 14s-7 15-18 15c-3 0-5 0-7-1l-8 7 2-9C6 29 4 25 4 20 4 11 11 5 23 5z",
  "M9 10c1-5 8-6 11-3 4-4 9-2 11 1 6-1 9 4 7 8 5 4 4 10-1 12 0 5-6 8-10 5-3 4-8 4-10 1l-8 7 2-8c-5 0-8-4-6-8-5-4-4-10 1-12-1-2 1-3 3-3z",
];

const COLORS = [
  "#000000", "#7f7f7f", "#880015", "#ed1c24", "#ff7f27", "#fff200", "#22b14c", "#00a2e8", "#3f48cc", "#a349a4",
  "#ffffff", "#c3c3c3", "#b97a57", "#ffaec9", "#ffc90e", "#efe4b0", "#b5e61d", "#99d9ea", "#7092be", "#c8bfe7",
];

const ClipboardArt = (
  <svg viewBox="0 0 68 92" className="h-[92px] w-[68px]"><rect x="1" y="8" width="66" height="82" rx="4" fill="#b98544" stroke="#7d5423" strokeWidth="1.500" /><path d="M7 16h54v66H7z" fill="#fcfdff" /><path d="M10 28h48M10 35h48M10 42h48M10 49h48M10 56h48M10 63h48M10 70h48" stroke="#b9c8dc" strokeWidth="1.500" /><path d="M14 18v-4q0-3 6-4h6q2-8 8-8t8 8h6q6 1 6 4v4z" fill="#8b8f94" stroke="#55595e" /><circle cx="34" cy="8" r="3" fill="#f5f6f7" /></svg>
);
const CutArt = <svg viewBox="0 0 34 48" className="h-12 w-[34px]" fill="none"><path d="M9 2 20 30M25 2 13 30" stroke="#8295ab" strokeWidth="4" /><ellipse cx="8" cy="38" rx="5.500" ry="8" stroke="#2680c9" strokeWidth="4" transform="rotate(20 8 38)" /><ellipse cx="26" cy="38" rx="5.500" ry="8" stroke="#2680c9" strokeWidth="4" transform="rotate(-20 26 38)" /></svg>;
const CopyArt = <svg viewBox="0 0 44 48" className="h-12 w-11" stroke="#9aa5b2" fill="#fff"><path d="M2 2h18l7 7v26H2z" /><path d="M6 12h14M6 17h14M6 22h14M6 27h14" stroke="#9fbfe0" /><path d="M16 12h18l8 8v26H16z" /><path d="M34 12v8h8" /><path d="M21 24h15M21 28h15M21 32h15M21 36h15M21 40h15" stroke="#3b82c4" strokeWidth="1.600" /></svg>;
const CropArt = <svg viewBox="0 0 42 42" className="size-[42px]" fill="none" stroke="#3777a8" strokeWidth="2"><path d="M0 10h33v31M9 2v30h33M34 8l8-8" /><path d="M12 13h18v16H12z" fill="#eef7fc" stroke="none" /><path d="m15 27 13-13" /></svg>;
const ResizeArt = <svg viewBox="0 0 44 40" className="h-10 w-11" stroke="#2f78b5" strokeWidth="1.800" fill="#dff0fa"><path d="M1 19h22v20H1z" /><path d="M11 1h32v27H11z" fill="#f2fafe" /></svg>;
const RotateArt = <svg viewBox="0 0 46 40" className="h-10 w-[46px]"><path d="M0 38 24 20v18z" fill="#b9bcc0" /><path d="M28 4 45 38H28z" fill="#2d83c0" stroke="#155f96" /><path d="M9 18q0-11 10-11" fill="none" stroke="#2176c7" strokeWidth="4" /><path d="m18 0 8 7-8 7z" fill="#2176c7" /></svg>;
const PencilArt = <svg viewBox="0 0 46 46" className="size-[46px]"><path d="M2 44 6 33 35 4l8 7L13 40z" fill="#f6d568" stroke="#7a6230" /><path d="m35 4 3-3q4-1 6 2t1 5l-3 3z" fill="#d9576a" /><path d="m31 8 4-4 8 7-4 4z" fill="#4e9468" /><path d="M2 44 6 33l7 7z" fill="#e9c9a0" /><path d="m2 44 2-5 3 3z" fill="#333" /></svg>;
const FillArt = (m = "#e8642c", b = "#6b9dc8", f = "#d3e8f6") => <svg viewBox="0 0 46 48" className="h-12 w-[46px]"><path d="M25 12 45 28 28 46 8 24z" fill={f} stroke={b} strokeWidth="1.500" /><path d="M27 30 45 28 28 46 12 28z" fill={b} opacity=".45" /><path d="M12 15C4 15 1 26 2 40c4-2 4-12 8-16l8-8z" fill={m} /><path d="M22 24V8q0-6 4-6t4 6v10" fill="none" stroke="#8e979f" strokeWidth="2" /><circle cx="24" cy="24" r="3" fill="#eef" stroke="#7d8790" /></svg>;
const EraserArt = <svg viewBox="0 0 46 44" className="h-11 w-[46px]"><path d="M22 4 44 3q2 0 2 3L40 22 22 40q-3 3-7 2L3 36q-3-2-1-6z" fill="#f48f8f" stroke="#c86a6a" /><path d="m2 30 7-10 17 7-5 14q-3 2-6 1L3 36q-3-2-1-6z" fill="#f9b9b0" stroke="#c86a6a" /></svg>;
const PickerArt = <svg viewBox="0 0 46 46" className="size-[46px]"><path d="M2 45q-1-6 4-10l18-17 7 7-19 17q-5 4-10 3z" fill="#e8f1f7" stroke="#8da0ae" strokeWidth="1.500" /><path d="m20 14 4-3 5 2 9-11q6-3 7 2t-3 9l-9 8 1 5-5 3z" fill="#1f6fb2" stroke="#124c80" /></svg>;
const LensArt = <svg viewBox="0 0 46 46" className="size-[46px]"><path d="m28 28 14 16" stroke="#9a6f41" strokeWidth="6" strokeLinecap="round" /><circle cx="18" cy="17" r="15" fill="#d6e8fb" stroke="#8d959e" strokeWidth="3.500" /></svg>;
const BrushArt = (
  <svg viewBox="0 0 96 96" className="size-24"><defs><linearGradient id="bb" x1="0" y1="0" x2="1" y2="1"><stop offset="0" stopColor="#fff" /><stop offset="1" stopColor="#d5e9f0" /></linearGradient></defs><rect x="1" y="1" width="94" height="94" fill="url(#bb)" stroke="#8f969b" strokeWidth="1.500" /><path d="M33 17c5 1 8 4 7 9-1 7-6 8-14 15-8 9-12 18-6 27 3 5 8 9 14 11l14 5-8 5C22 93 8 86 4 72 0 54 5 42 18 36c8-3 18-7 19-13 0-3-2-4-4-6z" fill="#f4632a" /><path d="M95 8v40L82 60 66 42z" fill="#8d9fc0" /><path d="M95 8v12L76 52 66 42z" fill="#c9d3e6" /><path d="M66 42q10 0 16 16-2 20-22 26l-20 2q2-8 2-22 4-22 24-22z" fill="#9a6a34" stroke="#6d4516" /><path d="M64 50 50 80M70 52 58 80M58 50 46 76" stroke="#c39254" /><path d="M40 68q12 8 10 16-10 8-26 4 12-8 16-20z" fill="#e94e1b" /></svg>
);

const Dashed = <span className="h-[66px] w-[84px] border-2 border-dotted border-[#3d74a8] bg-[#c7def5]" />;

const SizeArt = (
  <span className="flex w-24 flex-col gap-[6px] pt-1">{["h-[3px]", "h-1", "h-[7px]", "h-[10px]", "h-[13px]", "h-[19px]"].map((h) => <span key={h} className={"w-full bg-[#7a8cab] " + h} />)}</span>
);

const Spectrum = <span className="h-[90px] w-[90px] border-2 border-[#b5b5b5] bg-white p-1"><span className="block size-full bg-[linear-gradient(to_bottom,transparent_30%,#808080),linear-gradient(to_right,#f00,#ff0,#0f0,#0ff,#00f,#f0f,#f00)]" /></span>;

const P3DArt = (
  <span className="flex size-[90px] items-center justify-center border-2 border-[#b5b5b5] bg-[#f8f8f8]">
    <svg viewBox="0 0 52 72" className="h-[72px] w-[52px]"><defs><linearGradient id="p3" x1=".7" y1="0" x2=".4" y2="1"><stop offset="0" stopColor="#22d3ee" /><stop offset=".38" stopColor="#7b6cf0" /><stop offset=".65" stopColor="#e0457f" /><stop offset="1" stopColor="#f2a007" /></linearGradient></defs><path d="M27 0c14 0 24 11 24 25 0 20-19 24-34 47 0-20-15-26-15-46C2 12 13 0 27 0z" fill="url(#p3)" /></svg>
  </span>
);

function Ribbon() {
  return (
    <div className="flex h-[290px] overflow-hidden border-b-3 border-[#dadbdc] bg-[#f5f6f7] text-[30px] text-[#3b3b3b]">
      <Group label="Clipboard" className="w-[313px]">
        <Big className="ml-[31px] w-[100px]" icon={ClipboardArt} lines={["Paste"]} arrow />
        <div className="ml-6 flex flex-col pt-[2px]"><Row icon={CutArt} label="Cut" /><Row icon={CopyArt} label="Copy" /></div>
      </Group>
      <Group label="Image" className="w-[348px]" labelClass="pr-3">
        <Big className="ml-2 w-[126px] border border-[#62a2e4] bg-[#c9e0f7] bg-[linear-gradient(#62a2e4,#62a2e4)] bg-[size:100%_1px] bg-[position:0_113px] bg-no-repeat" icon={Dashed} lines={["Select"]} arrow />
        <div className="ml-3 flex flex-col pt-[2px]"><Row icon={CropArt} label="Crop" /><Row icon={ResizeArt} label="Resize" /><Row icon={RotateArt} label="Rotate" arrow /></div>
      </Group>
      <Group label="Tools" className="w-[236px]" labelClass="pr-3">
        <div className="ml-[11px] grid grid-cols-[68px_68px_68px] grid-rows-[89px_89px] place-items-center pt-3">
          <button aria-label="Pencil">{PencilArt}</button><button aria-label="Fill with color">{FillArt()}</button>
          <button aria-label="Text" className="font-['Liberation_Serif',serif] text-[64px] leading-[60px] font-bold text-[#1f3f66]">A</button>
          <button aria-label="Eraser">{EraserArt}</button><button aria-label="Color picker">{PickerArt}</button><button aria-label="Magnifier">{LensArt}</button>
        </div>
      </Group>
      <Group label="" className="w-[154px]"><Big className="ml-[8px] w-[126px]" icon={BrushArt} lines={["Brushes"]} arrow /></Group>
      <Group label="Shapes" className="w-[718px]" labelClass="pr-[10px]">
        <div className="mt-[9px] ml-3 flex h-[180px] border-2 border-[#d5dae0] bg-[#fbfcfe]">
          <div className="grid grid-cols-[repeat(7,60px)] grid-rows-[repeat(3,60px)] place-items-center">
            {SHAPES.map((d, i) => (
              <button key={i} aria-label={"Shape " + (i + 1)}><svg viewBox="0 0 44 46" className="h-[48px] w-12" fill={i < 2 ? "none" : "#eaf5f9"} stroke="#3576ae" strokeWidth="1.800"><path d={d} /></svg></button>
            ))}
          </div>
          <div className="ml-[6px] flex w-10 flex-col items-center justify-around border-l-2 border-[#dde1e6] bg-[#f5f6f7]">
            <svg viewBox="0 0 12 8" className="h-2 w-3" fill="#a9b2bf"><path d="M6 0l6 8H0z" /></svg>
            <svg viewBox="0 0 16 9" className="h-[9px] w-4" fill="#4a5f7a"><path d="M0 0h16L8 9z" /></svg>
            <svg viewBox="0 0 20 14" className="h-[14px] w-5" fill="#4a5f7a"><path d="M0 0h20v2H0zM2 5h16l-8 9z" /></svg>
          </div>
        </div>
        <div className="ml-[18px] flex flex-col pt-[2px] text-[#8d8d8d]">
          <Row arrowClass="text-[#666]" icon={<svg viewBox="0 0 46 44" className="h-11 w-[46px]" fill="#dde4f2" stroke="#8b9ab8" strokeWidth="1.800"><path d="M30 10H1v33h30V34" fill="none" /><path d="M10 42 12 32 38 3q4-3 6 0t0 7L18 38z" /></svg>} label="Outline" arrow />
          <Row arrowClass="text-[#666]" icon={<span className="flex flex-col items-center border-b-10 border-[#aab5cd]">{FillArt("#8d9bbb", "#98a6c4", "#e2e8f3")}</span>} label="Fill" arrow />
        </div>
      </Group>
      <Group label="" className="w-[155px]"><Big className="ml-[8px] w-[126px] text-[#8d8d8d]" icon={SizeArt} lines={["Size"]} arrow arrowClass="text-[#666]" /></Group>
      <Group label="Colors" className="w-[1067px]" labelClass="pr-3">
        <Big className="ml-2 w-[126px] border border-[#62a2e4] bg-[#c9e0f7]" icon={<span className="size-24 border-2 border-[#848c94] p-1"><span className="block size-full bg-black" /></span>} lines={["Color", "1"]} />
        <Big icon={<span className="size-[74px] border-2 border-[#a0a0a0] bg-white" />} lines={["Color", "2"]} />
        <div className="mt-px grid grid-cols-[repeat(10,64px)] gap-[2px]">
          {Array.from({ length: 30 }, (_, i) => (
            <button key={i} aria-label={"Color " + (i + 1)} className="h-16 border border-[#a0a0a0] p-[2px]" style={{ backgroundColor: i < 20 ? "#fff" : "#f5f6f7" }}>
              <span className="block size-full" style={{ backgroundColor: COLORS[i] }} />
            </button>
          ))}
        </div>
        <Big icon={Spectrum} lines={["Edit", "colors"]} />
      </Group>
      <Group label="" className="w-[166px]"><Big className="ml-[10px] w-[132px]" icon={P3DArt} lines={["Edit with", "Paint 3D"]} /></Group>
    </div>
  );
}

const Field = ({ id, label, children }) => (
  <div className="w-[562px]">
    <label htmlFor={id} className="block h-[41px] leading-9">{label}</label>
    <div className="relative">{children}</div>
  </div>
);

const BOX = "h-[66px] w-full appearance-none rounded-lg border-2 border-[#dbe4ec] bg-white text-[#4b4b4b] ";
const HANDLES = ["-left-1 -top-1", "left-1/2 -top-1", "-right-1 -top-1", "-left-1 top-1/2", "-right-1 top-1/2", "-left-1 -bottom-1", "left-1/2 -bottom-1", "-right-1 -bottom-1"];
const PickChev = () => <Chev className="absolute top-[17px] right-[23px] size-[34px] text-[#c8c8c8]" />;

function EditBotMessage() {
  return (
    <section aria-label="Edit bot message" className="relative flex min-h-[791px] w-[1745px] max-w-full flex-col border-2 border-dashed border-[#2f86cf] bg-white font-[Inter,sans-serif] text-[27px] text-[#5e5e5e] shadow-[8px_8px_4px_rgba(120,135,165,0.35)]">
      <header className="bg-[#fafafa] pr-[82px] pl-[76px]">
        <div className="-mr-[56px] flex h-[40px] items-center justify-end"><button aria-label="Close"><Cross className="size-[20px]" w={4} /></button></div>
        <div className="flex h-[66px] items-center">
          <DialogIcon className="ml-[3px] size-11 text-[#575757]" />
          <h2 className="ml-[30px] text-[40px] font-bold text-[#919191]">Edit bot message</h2>
          <div className="relative ml-auto w-[396px]">
            <select aria-label="Language" className={BOX + "pl-[22px]"}><option>EN - English</option></select>
            <PickChev />
          </div>
        </div>
        <div className="mt-[39px] flex h-[66px] text-black">
          <button className="w-[191px] rounded-t-lg bg-white text-[#23babc]">Settings</button>
          <button className="ml-[131px] w-[51px]">NLP</button>
          <button className="ml-[177px] whitespace-nowrap">Bot message</button>
        </div>
      </header>
      <div className="flex gap-[270px] pt-[50px] pl-[49px]">
        <div className="flex flex-col gap-[57px]">
          <Field id="name" label="Bot dialog name"><input id="name" defaultValue="Not understood" className={BOX + "pl-[17px]"} /></Field>
          <Field id="flow" label="Flow">
            <select id="flow" className={BOX + "pl-[75px]"}><option>General</option></select>
            <FlowIcon className="absolute top-[18px] left-[18px] size-[32px]" />
            <PickChev />
          </Field>
          <Field id="parent" label="Parent">
            <select id="parent" className={BOX + "pl-[22px]"}><option>No parent</option></select>
            <PickChev />
          </Field>
        </div>
        <Field id="type" label="Type">
          <select id="type" defaultValue="Bot Message" className="h-[66px] w-full appearance-none rounded-lg border-2 border-[#808080] bg-white pl-[20px]">
            <option>Action</option><option>Input Validation</option><option>Bot Message</option><option>Go To</option>
          </select>
          <span className="absolute top-[18px] left-[23px] h-[30px] w-[2px] bg-black" />
          <Chev className="absolute top-[17px] right-[25px] size-[34px]" w={4} />
          <ul role="listbox" aria-label="Type options" className="absolute top-[74px] left-0 w-[564px] rounded-lg border-2 border-[#808080] bg-white pt-[10px] pb-[8px] text-[#7a7a7a]">
            <li role="option" aria-selected="false" className="h-[82px] bg-[#f4f8fb] pl-[26px] leading-[82px] text-[#23babc]">Action</li>
            <li role="option" aria-selected="false" className="h-[82px] pl-[26px] leading-[82px]">Input Validation</li>
            <li role="option" aria-selected="true" className="h-[82px] bg-[#23babc] pl-[26px] leading-[82px] font-medium text-white">Bot Message</li>
            <li role="option" aria-selected="false" className="h-[82px] pl-[26px] leading-[82px]">Go To</li>
          </ul>
        </Field>
      </div>
      {HANDLES.map((h) => <span key={h} className={"absolute size-[6px] border border-[#444] bg-white " + h} />)}
    </section>
  );
}

function Paint() {
  return (
    <div className={"flex min-w-0 flex-1 flex-col bg-white " + SEGOE}>
      <div className="flex h-[67px] items-center pt-[3px] pl-[1px]">
        <Palette className="h-[46px] w-12" />
        <span className="ml-[10px] h-10 w-[2px] bg-[#9a9a9a]" />
        <svg viewBox="0 0 38 38" className="ml-[39px] size-[38px]"><path d="M1 1h36v36H4l-3-3z" fill="#8561b5" stroke="#5e3f8c" /><path d="M7 2h24v19H7z" fill="#f6f4fa" /><path d="M9 7h20M9 12h20M9 17h20" stroke="#b9aed0" /><path d="M9 26h20v11H9z" fill="#d8d3e2" /><path d="M12 28h6v8h-6z" fill="#4a3670" /></svg>
        <svg viewBox="0 0 40 42" className="ml-[27px] h-[42px] w-10"><path d="M1 0v19h20l-6-7c12-2 16 6 14 12-1 6-5 10-4 17 9-2 15-13 13-23C36 6 24 1 9 7z" fill="#2f9be0" /></svg>
        <svg viewBox="0 0 40 42" className="ml-[26px] h-[42px] w-10 -scale-x-100"><path d="M1 0v19h20l-6-7c12-2 16 6 14 12-1 6-5 10-4 17 9-2 15-13 13-23C36 6 24 1 9 7z" fill="#a5b2ca" /></svg>
        <svg viewBox="0 0 20 16" className="ml-[25px] h-4 w-5"><path d="M1 0h18v3H1zM3 7h14l-7 8z" /></svg>
        <span className="ml-[32px] h-10 w-[2px] bg-[#9a9a9a]" />
        <h1 className="ml-[12px] text-[34px] leading-10 whitespace-nowrap text-[#999]">Untitled - Paint</h1>
        <div className="ml-auto flex items-center gap-[116px] pr-[61px] pb-[5px] text-[#8d8d8d]">
          <button aria-label="Minimize" className="h-[2px] w-5 bg-[#8d8d8d]" />
          <button aria-label="Restore"><Restore className="size-[21px]" w={2} /></button>
          <button aria-label="Close"><Cross className="size-[24px]" w={1.5} /></button>
        </div>
      </div>
      <nav className="flex h-[74px] items-stretch border-b-2 border-[#dadbdc] text-[30px] text-[#3b3b3b]">
        <button className="mb-[2px] w-[168px] bg-[#1979ca] text-white">File</button>
        <button className="-mb-[2px] w-[167px] border-2 border-b-0 border-[#dadbdc] bg-[#f5f6f7]">Home</button>
        <button className="w-[156px] pt-[2px]">View</button>
        <div className="ml-auto flex items-center gap-[22px] pr-[11px]">
          <Chev dir="up" className="size-[44px] text-[#777]" w={1.5} />
          <button aria-label="Help" className="flex size-11 items-center justify-center rounded-full bg-[#0c68c4] text-[34px] leading-none text-white">?</button>
        </div>
      </nav>
      <Ribbon />
      <main className="flex-1 bg-[linear-gradient(#c5cee0,#dce6f2)] pt-1 pl-[5px]"><EditBotMessage /></main>
      <footer className="flex h-[79px] items-center border-t-2 border-[#d7d7d7] bg-[#f0f0f0] text-[35px] text-black">
        <div className="w-[447px] pl-[3px]"><svg viewBox="0 0 44 44" className="size-11" fill="#2b4a70"><path d="M21 4h2v36h-2zM4 21h36v2H4zM22 0l6 8H16zM22 44l6-8H16zM0 22l8-6v12zM44 22l-8-6v12z" /></svg></div>
        <div className="w-[443px]"><svg viewBox="0 0 46 44" className="h-11 w-[46px]" fill="none" stroke="#2b4a70" strokeWidth="2"><path d="M10 2h34v30H10z" strokeDasharray="3 3" /><path d="M4 6v28M14 40h26M0 8l4-6 4 6M36 36l6 4-6 4" /></svg></div>
        <div className="flex w-[438px] items-center gap-[5px] whitespace-nowrap"><svg viewBox="0 0 46 44" className="h-11 w-[46px]" fill="none" stroke="#2b4a70" strokeWidth="2"><path d="M10 2h34v30H10z" fill="#e3f3f8" /><path d="M4 6v28M14 40h26M0 8l4-6 4 6M36 36l6 4-6 4" /></svg><span className="pt-1">872 × 395px</span></div>
        <div className="h-[75px] w-[445px] border-x-2 border-[#dcdcdc]" />
        <div className="flex-1" />
        <div className="flex h-[75px] w-[580px] items-center border-l-2 border-[#dcdcdc] pl-[47px]">
          <span className="mt-1 w-[108px]">200%</span>
          <div className="flex items-center gap-[30px] pb-[10px]">
            <button aria-label="Zoom out" className="flex size-11 items-center justify-center rounded-full border-2 border-[#888] bg-[linear-gradient(#fff,#d4d4d4)]"><span className="h-[6px] w-6 bg-[#606060]" /></button>
            <input
              type="range" aria-label="Zoom" defaultValue="57"
              className="h-[58px] w-[262px] appearance-none bg-transparent [&::-webkit-slider-runnable-track]:h-3 [&::-webkit-slider-runnable-track]:border-y [&::-webkit-slider-runnable-track]:border-[#d6d6d6] [&::-webkit-slider-runnable-track]:bg-[#e7eaea] [&::-webkit-slider-thumb]:-mt-[25px] [&::-webkit-slider-thumb]:h-[57px] [&::-webkit-slider-thumb]:w-[33px] [&::-webkit-slider-thumb]:appearance-none [&::-webkit-slider-thumb]:bg-[#0078d7] [&::-webkit-slider-thumb]:[clip-path:polygon(0_0,100%_0,100%_75%,50%_100%,0_75%)]"
            />
            <button aria-label="Zoom in" className="flex size-11 items-center justify-center rounded-full border-2 border-[#888] bg-[linear-gradient(#fff,#d4d4d4)]"><svg viewBox="0 0 24 24" className="size-6" fill="#606060"><path d="M9 0h6v9h9v6h-9v9H9v-9H0V9h9z" /></svg></button>
          </div>
        </div>
      </footer>
    </div>
  );
}

export default function App() {
  return (
    <div className="bg-white">
      <Monitor />
      <div className="flex min-h-[2160px]">
        <SideBar />
        <Paint />
      </div>
    </div>
  );
}
